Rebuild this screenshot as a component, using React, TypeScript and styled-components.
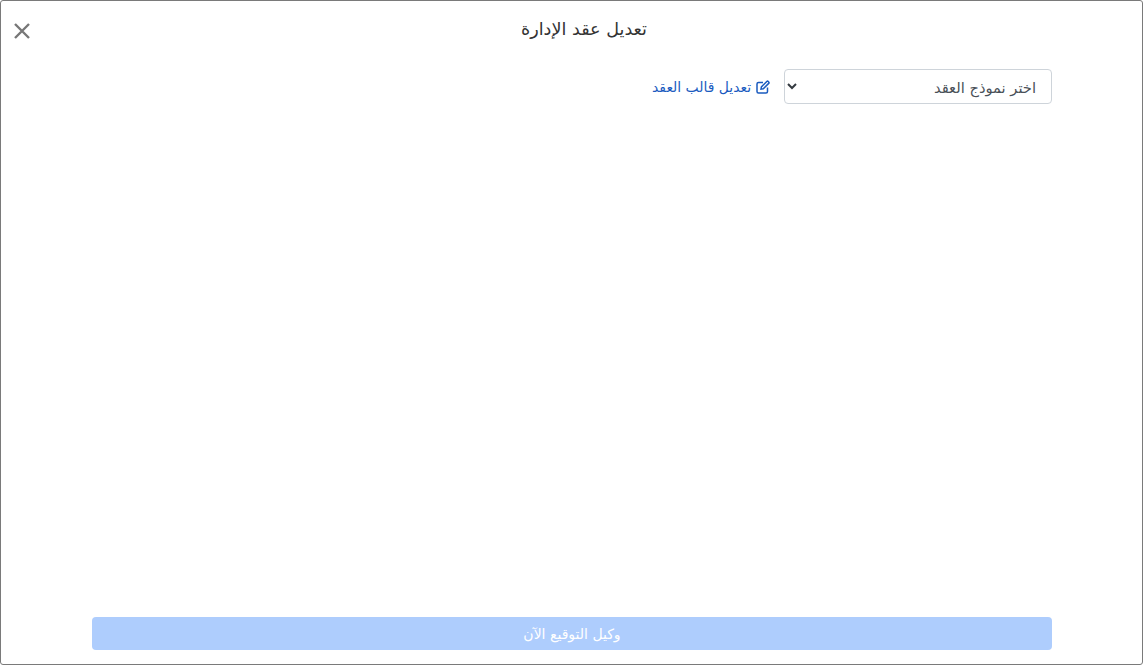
import React from "react";
import styled, { createGlobalStyle } from "styled-components";

const Global = createGlobalStyle`
  html, body { margin: 0; padding: 0; height: 100%; background: #fff; overflow: hidden; }
  #root { height: 100%; }
  * { box-sizing: border-box; }
`;

const Modal = styled.div`
  direction: rtl;
  width: 1143px;
  height: 665px;
  display: flex;
  flex-direction: column;
  background: #fff;
  border: 1px solid #7a7a7a;
  border-radius: 3px;
  font-family: "DejaVu Sans", "Noto Sans", sans-serif;
  color: #212529;
`;

const Header = styled.header`
  height: 57px;
  display: flex;
  align-items: center;
  padding: 0 6px 0 11px;
`;

const Title = styled.h5`
  flex: 1;
  margin: 0 0 2px;
  text-align: center;
  font-size: 17.6px;
  font-weight: 400;
  color: #333;
`;

const CloseButton = styled.button`
  width: 20px;
  height: 20px;
  padding: 0;
  margin-top: 3px;
  border: 0;
  background: none;
  display: flex;
  align-items: center;
  justify-content: center;
`;

const Body = styled.main`
  flex: 1;
  display: flex;
  flex-direction: column;
  width: 960px;
  margin-right: 90px;
  padding-top: 11px;
  padding-bottom: 14px;
`;

const TemplateRow = styled.div`
  display: flex;
  align-items: center;
  gap: 14px;
`;

const SelectBox = styled.div`
  width: 268px;
  height: 35px;
  display: flex;
  align-items: center;
  justify-content: space-between;
  padding: 1px 15px 0 2px;
  border: 1px solid #ced4da;
  border-radius: 4px;
  background: #fff;
  font-size: 14.7px;
  color: #495057;
`;

const Chevron = styled.svg`
  margin-top: -2px;
`;

const EditLink = styled.a`
  display: flex;
  align-items: center;
  gap: 5px;
  font-size: 13.9px;
  color: #1a5bbf;
  text-decoration: none;
`;

const Spacer = styled.div`
  flex: 1;
`;

const SubmitButton = styled.button`
  height: 33px;
  width: 100%;
  border: 0;
  border-radius: 4px;
  background: #aecdfd;
  color: #fff;
  font-family: inherit;
  font-size: 14px;
`;

export default function App() {
  return (
    <>
      <Global />
      <Modal>
        <Header>
          <Title>تعديل عقد الإدارة</Title>
          <CloseButton aria-label="إغلاق">
            <svg width="18" height="18" viewBox="0 0 18 18">
              <path d="M2 2 L16 16 M16 2 L2 16" stroke="#777" strokeWidth="2.4" fill="none" />
            </svg>
          </CloseButton>
        </Header>
        <Body>
          <TemplateRow>
            <SelectBox>
              <span>اختر نموذج العقد</span>
              <Chevron width="10" height="8" viewBox="0 0 10 8">
                <path d="M1 2 L5 6 L9 2" stroke="#343a40" strokeWidth="2" fill="none" />
              </Chevron>
            </SelectBox>
            <EditLink href="#">
              <svg width="14" height="14" viewBox="0 0 14 14" fill="none" stroke="#1a5bbf" strokeWidth="1.5">
                <path d="M7 2.5 H2.5 Q1 2.5 1 4 V11.5 Q1 13 2.5 13 H10 Q11.5 13 11.5 11.5 V7.5" />
                <path d="M5 9.2 L5.4 6.9 L10.8 1.5 Q11.5 .8 12.3 1.5 L12.7 1.9 Q13.4 2.7 12.7 3.4 L7.3 8.8 Z" />
              </svg>
              <span>تعديل قالب العقد</span>
            </EditLink>
          </TemplateRow>
          <Spacer />
          <SubmitButton disabled>وكيل التوقيع الآن</SubmitButton>
        </Body>
      </Modal>
    </>
  );
}
